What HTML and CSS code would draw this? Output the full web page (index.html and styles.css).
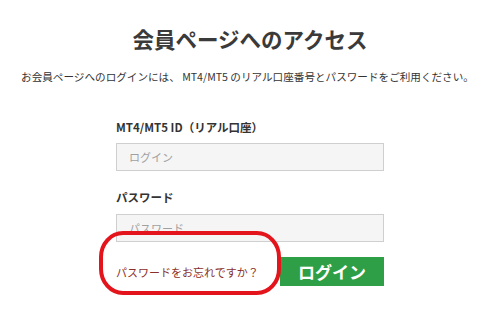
FILE: index.html
```html
<!DOCTYPE html>
<html lang="ja">
<head>
<meta charset="utf-8">
<link rel="stylesheet" href="styles.css">
</head>
<body>
<div class="page">
  <h1 class="title">会員ページへのアクセス</h1>
  <p class="lead">お会員ページへのログインには、 MT4/MT5 のリアル口座番号とパスワードをご利用ください。</p>
  <form class="form">
    <label class="label">MT4/MT5 ID（リアル口座）</label>
    <input class="field" type="text" placeholder="ログイン">
    <label class="label label-pw">パスワード</label>
    <input class="field field-pw" type="password" placeholder="パスワード">
    <div class="actions">
      <a class="forgot" href="#">パスワードをお忘れですか？</a>
      <button class="btn" type="button">ログイン</button>
    </div>
  </form>
  <svg class="mark" width="182" height="64" viewBox="0 0 182 64"><rect x="2" y="2" width="178" height="60" rx="22" ry="24" fill="none" stroke="#e3141b" stroke-width="4"/></svg>
</div>
</body>
</html>
```
FILE: styles.css
```css
html, body { margin: 0; padding: 0; background: #fff; }
body { font-family: "Noto Sans CJK JP", "Noto Sans", sans-serif; color: #333; }
.page { position: relative; width: 491px; height: 313px; overflow: hidden; }
.title {
  margin: 0; padding: 24px 0 0 9px;
  text-align: center; font-size: 21.5px; line-height: 30px; font-weight: 700; color: #3a3a3a;
}
.lead {
  margin: 15px 0 0; padding-left: 4px;
  text-align: center; font-size: 10.6px; line-height: 16px; color: #333;
}
.form { width: 268px; margin: 34px 0 0 116px; display: flex; flex-direction: column; }
.label { font-size: 11.5px; font-weight: 700; line-height: 16px; color: #333; }
.label-pw { margin-top: 18px; }
.field {
  box-sizing: border-box; width: 268px; height: 28px; margin-top: 8px;
  border: 1px solid #cfcfcf; background: #f5f5f5; padding: 0 0 0 12px;
  font-family: inherit; font-size: 11px; color: #333; outline: none;
}
.field-pw { margin-top: 9px; }
.field::placeholder { color: #a0a0a0; }
.actions { display: flex; align-items: center; justify-content: space-between; margin-top: 15px; }
.forgot { font-size: 11px; color: #8a2f2a; text-decoration: none; }
.btn {
  width: 104px; height: 29px; border: 0; background: #2e9f46; color: #fff;
  font-family: inherit; font-size: 17px; font-weight: 700; padding: 0; cursor: pointer;
}
.mark { position: absolute; left: 99px; top: 231px; }
```
